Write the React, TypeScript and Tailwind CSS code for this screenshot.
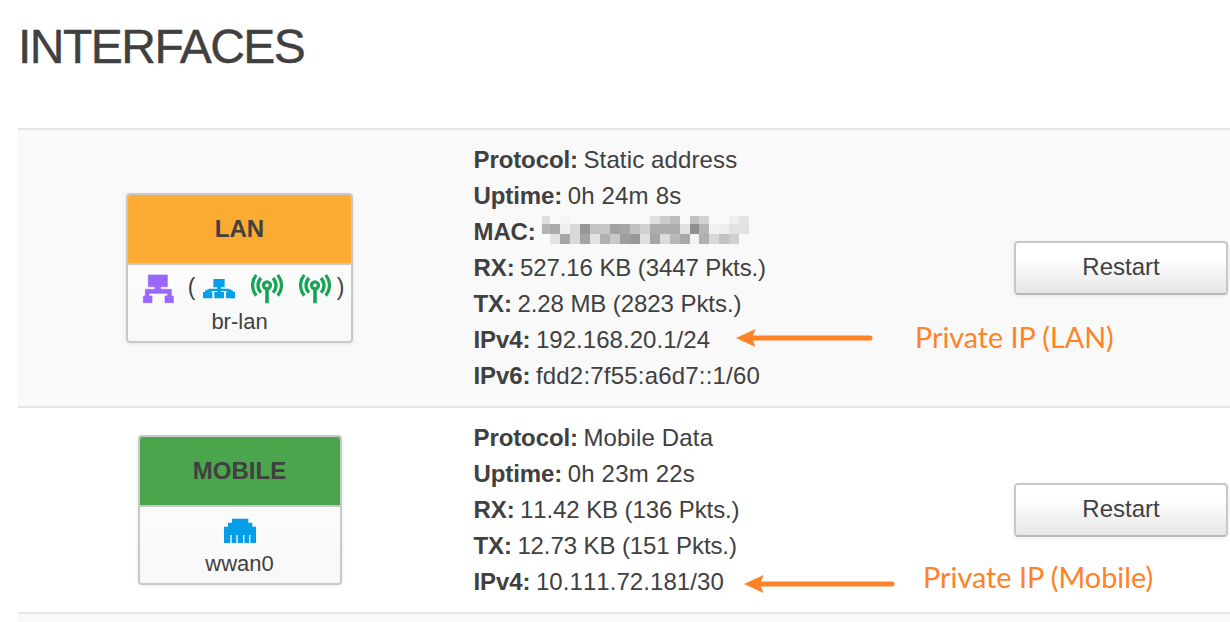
import type { ReactNode } from "react";

const ink = "text-[#404040]";

function BridgeIcon() {
  return (
    <svg className="block h-8 w-8" viewBox="66 264 96 96" fill="#9b66ff" stroke="#9b66ff" strokeWidth="2" strokeLinejoin="round">
      <path d="M85 270H142V305H122V313H154V333H160V353H135V333H143V325H87V333H96V353H70V333H76V313H105V305H85Z" />
    </svg>
  );
}

function SwitchIcon() {
  return (
    <svg className="block h-8 w-8" viewBox="249 264 96 96" fill="#069de9">
      <path d="M280 282H314V307H303V311H326L339 317V321H345V340H318V322L324 321L316 318H303V321H312V340H283V321H292V318H279L271 321L277 322V340H249V321H255V317L268 311H292V307H280Z" />
    </svg>
  );
}

function WifiIcon() {
  return (
    <svg className="block h-8 w-8" viewBox="393 264 96 96" fill="none" stroke="#1ba35a" strokeWidth="10">
      <circle cx="441" cy="301" r="10.5" strokeWidth="10" />
      <path d="M441 310V355" strokeWidth="11" />
      <path d="M423 279C411 292 411 310 423 323M459 279C471 292 471 310 459 323" />
      <path d="M409 270C394 288 394 314 409 332M473 270C488 288 488 314 473 332" />
    </svg>
  );
}

function EthernetIcon() {
  return (
    <svg className="block h-8 w-8" viewBox="281 270 96 96" fill="#069de9">
      <path d="M305 281H354V293H366V305H378V354H360V330H356V354H342V330H338V354H322V330H318V354H304V330H300V354H281V305H293V293H305Z" />
    </svg>
  );
}

function Card({ title, color, width, name, children }: { title: string; color: string; width: string; name: string; children: ReactNode }) {
  return (
    <div className={`${width} h-[150px] overflow-hidden rounded-[4px] border-2 border-[#c8c8c8] bg-linear-to-b from-white to-[#f8f8f8] shadow-[0_1px_4px_rgba(0,0,0,0.08)]`}>
      <div className={`${color} flex h-[70px] items-center justify-center border-b-2 border-[#c8c8c8] text-[24px] font-bold`}>
        {title}
      </div>
      <div className="flex h-[40px] items-end justify-center">{children}</div>
      <div className="text-center text-[22px] leading-[34px]">{name}</div>
    </div>
  );
}

const shades = [
  ["#dedede", "", "#f5f5f5", "", "", "", "", "", "", "", "", "#e0e0e0", "#cbcbcb", "#bcbcbc", "", "#c2c2c2", "#d3d3d3", "", "", "#eeeeee", "#e5e5e5"],
  ["#b5b5b5", "#ababab", "#efefef", "#d9d9d9", "#989898", "#c3c3c3", "#c6c6c6", "#a2a2a2", "#a6a6a6", "#c2c2c2", "#d1d1d1", "#acacac", "#acacac", "#acacac", "#e1e1e1", "#8f8f8f", "#b5b5b5", "#f2f2f2", "#eeeeee", "#e2e2e2", "#e2e2e2"],
  ["#fbfbfb", "#e3e3e3", "#a6a6a6", "#d9d9d9", "#a4a4a4", "#e3e3e3", "#b0b0b0", "#c9c9c9", "#9e9e9e", "#989898", "#dfdfdf", "#a6a6a6", "#dcdcdc", "#b8b8b8", "#a8a8a8", "#f3f3f3", "#b0b0b0", "#d8d8d8", "#c2c2c2", "#d0d0d0", ""],
];

function Redacted() {
  return (
    <span className="mt-[2px] ml-[6px] grid grid-cols-[8px_repeat(14,10px)_9px_repeat(5,10px)] grid-rows-[8px_10px_10px]">
      {shades.flat().map((c, i) => (
        <span key={i} style={{ backgroundColor: c || "transparent" }} />
      ))}
    </span>
  );
}

function Line({ label, value, spacing = "" }: { label: string; value: ReactNode; spacing?: string }) {
  return (
    <div className="flex h-9 items-start text-[24px] leading-9 whitespace-nowrap">
      <b className="tracking-[-0.1px]">{label}:</b>
      {typeof value === "string" ? <span className={`ml-[5.5px] ${spacing}`}>{value}</span> : value}
    </div>
  );
}

function Restart() {
  return (
    <button className="h-[54px] w-[214px] rounded-[4px] border-2 border-[#c8c8c8] border-b-[#b8b8b8] bg-linear-to-b from-white from-30% to-[#e6e6e6] pb-[2px] text-[24px] shadow-[0_1px_4px_rgba(0,0,0,0.08)]">
      Restart
    </button>
  );
}

function Arrow({ length }: { length: number }) {
  return (
    <svg className="block" width={length} height="20" fill="none">
      <path d={`M14 10H${length - 3}`} stroke="#ff8227" strokeWidth="5" strokeLinecap="round" />
      <path d="M0 10L19.5 1L16 10L19.5 19Z" fill="#ff8227" />
    </svg>
  );
}

export default function App() {
  return (
    <main className={`relative h-[622px] w-[1230px] overflow-hidden bg-white font-['Liberation_Sans',Arial,sans-serif] ${ink}`}>
      <h1 className="flex h-32 items-start pt-[18px] pl-[18px] text-[48px] leading-[58px] tracking-[-1.5px] [-webkit-text-stroke:0.4px_#404040]">INTERFACES</h1>
      <section className="ml-[18px]">
        <div className="flex h-[278px] items-center border-t-2 border-[#e5e5e5] bg-[#f9f9f9]">
          <div className="flex w-[443px] justify-center">
            <Card title="LAN" color="bg-[#fbab31]" width="w-[227px]" name="br-lan">
              <span className="ml-[7px]"><BridgeIcon /></span>
              <span className="ml-[14px] w-[15px] text-[23px] leading-[36px]">(</span>
              <SwitchIcon />
              <span className="ml-4"><WifiIcon /></span>
              <span className="ml-4"><WifiIcon /></span>
              <span className="ml-[6px] text-[23px] leading-[36px]">)</span>
            </Card>
          </div>
          <div className="w-[553px] pl-[12.5px]">
            <Line label="Protocol" value="Static address" spacing="tracking-[0.13px]" />
            <Line label="Uptime" value="0h 24m 8s" spacing="tracking-[0.18px]" />
            <Line label="MAC" value={<Redacted />} />
            <Line label="RX" value="527.16 KB (3447 Pkts.)" spacing="tracking-[-0.1px]" />
            <Line label="TX" value="2.28 MB (2823 Pkts.)" spacing="tracking-[-0.07px]" />
            <Line label="IPv4" value="192.168.20.1/24" spacing="tracking-[0.05px]" />
            <Line label="IPv6" value="fdd2:7f55:a6d7::1/60" spacing="tracking-[0.2px]" />
          </div>
          <Restart />
        </div>
        <div className="flex h-[206px] items-center border-t-2 border-[#e5e5e5] bg-white">
          <div className="flex w-[443px] justify-center">
            <Card title="MOBILE" color="bg-[#4aa54c]" width="w-[204px]" name="wwan0">
              <EthernetIcon />
            </Card>
          </div>
          <div className="w-[553px] pl-[12.5px]">
            <Line label="Protocol" value="Mobile Data" spacing="tracking-[0.15px]" />
            <Line label="Uptime" value="0h 23m 22s" spacing="tracking-[0.2px]" />
            <Line label="RX" value="11.42 KB (136 Pkts.)" spacing="[font-kerning:none] tracking-[-0.1px]" />
            <Line label="TX" value="12.73 KB (151 Pkts.)" spacing="tracking-[-0.1px]" />
            <Line label="IPv4" value="10.111.72.181/30" spacing="[font-kerning:none] tracking-[0.07px]" />
          </div>
          <Restart />
        </div>
        <div className="h-[10px] border-t-2 border-[#e5e5e5] bg-[#f9f9f9]" />
      </section>
      <div className="absolute top-[328px] left-[736px]"><Arrow length={137} /></div>
      <div className="absolute top-[574px] left-[744px]"><Arrow length={151} /></div>
      <div className="absolute top-[319px] left-[915px] font-[Lato,sans-serif] text-[28.7px] leading-9 whitespace-nowrap text-[#ff8227]">Private IP (LAN)</div>
      <div className="absolute top-[559px] left-[923px] font-[Lato,sans-serif] text-[28.8px] leading-9 whitespace-nowrap text-[#ff8227]">Private IP (Mobile)</div>
    </main>
  );
}
